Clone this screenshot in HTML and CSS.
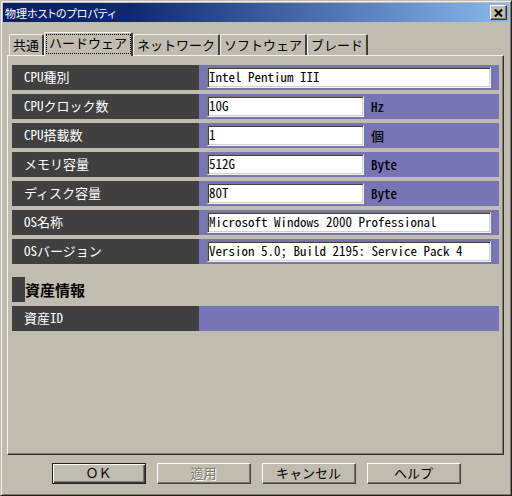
FILE: index.html
```html
<!DOCTYPE html>
<html lang="ja">
<head>
<meta charset="utf-8">
<title>物理ホストのプロパティ</title>
<link rel="stylesheet" href="styles.css">
</head>
<body>
<main class="dialog">
  <header class="titlebar">
    <h1 class="title">物理ホストのプロパティ</h1>
    <button class="close" type="button" aria-label="閉じる">
      <svg width="9" height="8" viewBox="0 0 9 8"><path d="M1 0.5L8 7.5M8 0.5L1 7.5" fill="none" stroke="#000" stroke-width="2"/></svg>
    </button>
  </header>
  <div class="tabs" role="tablist">
    <button class="tab" type="button" role="tab">共通</button>
    <button class="tab active" type="button" role="tab" aria-selected="true">ハードウェア</button>
    <button class="tab" type="button" role="tab">ネットワーク</button>
    <button class="tab" type="button" role="tab">ソフトウェア</button>
    <button class="tab" type="button" role="tab">ブレード</button>
  </div>
  <form class="panel" id="props">
    <div class="row"><label class="name" for="cpu">CPU種別</label><div class="value"><input class="field wide" id="cpu" value="Intel Pentium III"></div></div>
    <div class="row"><label class="name" for="clock">CPUクロック数</label><div class="value"><input class="field" id="clock" value="10G"><span class="unit">Hz</span></div></div>
    <div class="row"><label class="name" for="count">CPU搭載数</label><div class="value"><input class="field" id="count" value="1"><span class="unit">個</span></div></div>
    <div class="row"><label class="name" for="memory">メモリ容量</label><div class="value"><input class="field" id="memory" value="512G"><span class="unit">Byte</span></div></div>
    <div class="row"><label class="name" for="disk">ディスク容量</label><div class="value"><input class="field" id="disk" value="80T"><span class="unit">Byte</span></div></div>
    <div class="row"><label class="name" for="os">OS名称</label><div class="value"><input class="field wide" id="os" value="Microsoft Windows 2000 Professional"></div></div>
    <div class="row"><label class="name" for="version">OSバージョン</label><div class="value"><input class="field wide" id="version" value="Version 5.0; Build 2195: Service Pack 4"></div></div>
    <h2 class="section">資産情報</h2>
    <div class="row"><span class="name">資産ID</span><div class="value"></div></div>
  </form>
  <footer class="actions">
    <button class="button default" type="submit" form="props">ＯＫ</button>
    <button class="button" type="button" disabled>適用</button>
    <button class="button" type="button">キャンセル</button>
    <button class="button" type="button">ヘルプ</button>
  </footer>
</main>
</body>
</html>
```
FILE: styles.css
```css
* { box-sizing: border-box; }

body {
  margin: 0;
  background: #c0bcb0;
}

body, button, input {
  color: #000;
  font-family: "Noto Sans CJK JP", sans-serif;
  font-size: 13px;
  line-height: 18px;
}

.dialog {
  display: flex;
  flex-direction: column;
  min-height: 100vh;
  padding: 1px;
  border: 1px solid;
  border-color: #c0bcb0 #202020 #202020 #c0bcb0;
  box-shadow: inset 1px 1px #f4f2ec, inset -1px -1px #7c7970;
}

.titlebar {
  display: flex;
  align-items: center;
  justify-content: space-between;
  height: 19px;
  margin: 1px;
  padding: 0 2px;
  background: linear-gradient(90deg, #0a2068, #0e2870 25%, #8ab8ee);
}

.title {
  margin: 0;
  color: #fff;
  font-size: 11px;
  font-weight: 400;
  font-feature-settings: "palt";
}

.close {
  display: flex;
  align-items: center;
  justify-content: center;
  width: 17px;
  height: 15px;
  padding: 0;
  border: 1px solid;
  border-color: #fff #303030 #303030 #fff;
  background: #c0bcb0;
  box-shadow: inset -1px -1px #7c7970;
}

.tabs {
  display: flex;
  align-items: flex-end;
  height: 32px;
  padding: 0 7px;
}

.tab {
  height: 21px;
  padding: 0 3px;
  border: 1px solid;
  border-width: 1px 2px 0 1px;
  border-color: #f4f2ec #404040 #404040 #f4f2ec;
  border-radius: 2px 2px 0 0;
  background: #c0bcb0;
}

.tab.active {
  position: relative;
  height: 24px;
  margin-bottom: -1px;
  padding: 0 4px 3px;
  outline: 1px dotted #000;
  outline-offset: -3px;
}

.panel {
  display: flex;
  flex: 1;
  flex-direction: column;
  gap: 4px;
  margin: 0 6px 0 5px;
  padding: 9px 4px;
  border: 1px solid;
  border-color: #f4f2ec #303030 #303030 #f4f2ec;
  box-shadow: inset -1px -1px #7c7970;
}

.row {
  display: grid;
  grid-template-columns: 187px 1fr;
  height: 25px;
  font-feature-settings: "hwid";
}

.name {
  padding: 3px 12px;
  background: #404040;
  color: #fff;
}

.value {
  display: flex;
  align-items: center;
  gap: 7px;
  padding: 0 8px;
  background: #7875b6;
}

.unit { font-weight: 500; }

.field {
  width: 157px;
  height: 21px;
  padding: 0 1px 2px;
  border: 1px solid;
  border-color: #7c7970 #f4f2ec #f4f2ec #7c7970;
  border-radius: 0;
  background: #fff;
  box-shadow: inset 1px 1px #404040, inset -1px -1px #d4d0c8;
  font-feature-settings: "hwid";
}

.field.wide { width: 100%; }

.section {
  margin: 9px 0 0;
  border-left: 13px solid #404040;
  font-size: 15px;
  font-weight: 700;
  line-height: 25px;
}

.actions {
  display: flex;
  justify-content: center;
  gap: 11px;
  padding: 8px 0 10px;
}

.button {
  width: 94px;
  height: 21px;
  padding: 0 0 2px;
  border: 1px solid;
  border-color: #fff #404040 #404040 #fff;
  background: #c0bcb0;
  box-shadow: inset -1px -1px #7c7970;
}

.button.default {
  border-color: #202020;
  box-shadow: inset 1px 1px #fff, inset -1px -1px #404040, inset -2px -2px #7c7970;
}

.button:disabled {
  color: #7c7970;
  text-shadow: 1px 1px #fff;
}
```
